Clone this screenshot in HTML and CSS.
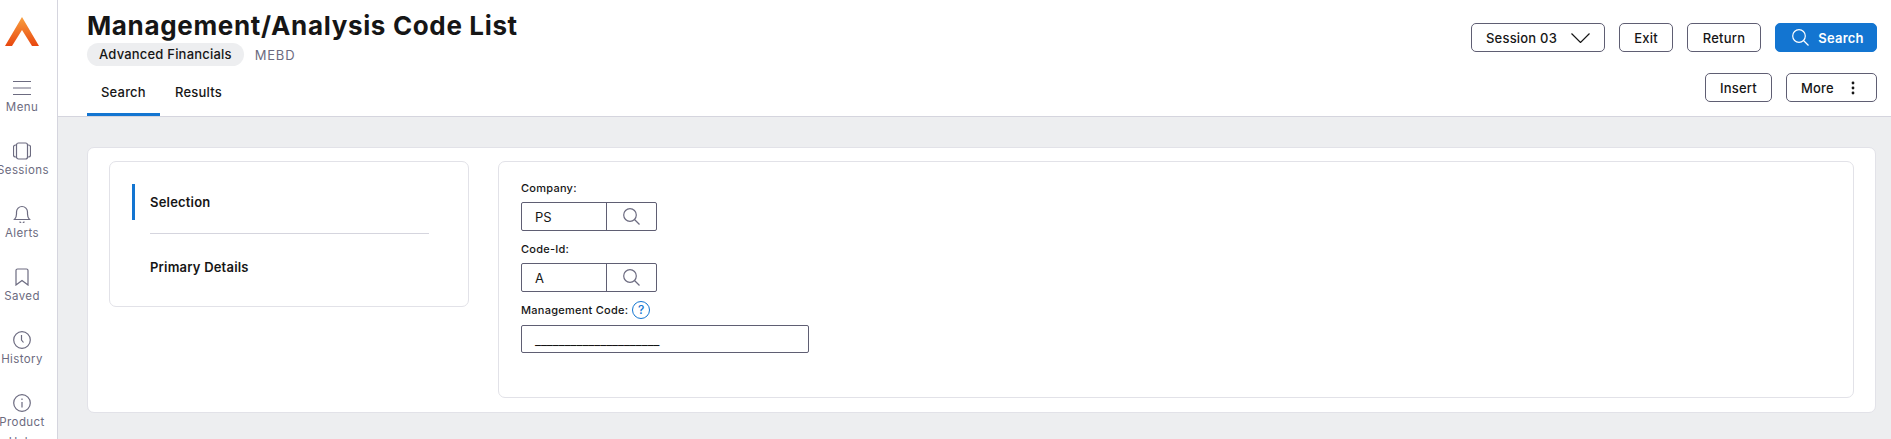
FILE: index.html
```html
<!DOCTYPE html>
<html lang="en">
  <head>
    <meta charset="utf-8" />
    <title>Management/Analysis Code List</title>
    <link rel="stylesheet" href="styles.css">
  </head>
  <body>
    <nav class="sidebar">
      <svg class="logo" width="34" height="30" viewBox="0 0 34 30">
        <defs>
          <linearGradient id="logo-fill" x1="0" y1="0" x2="0" y2="1">
            <stop offset="0" stop-color="#f9a03f" />
            <stop offset="1" stop-color="#e8470f" />
          </linearGradient>
        </defs>
        <polygon points="17,0 34,29 27,29 17,13 7,29 0,29" fill="url(#logo-fill)" />
      </svg>
      <a class="side-item">
        <svg width="18" height="18" viewBox="0 0 18 18"><path d="M0 2.500h18M0 9h18M0 15.500h18" /></svg>
        <span>Menu</span>
      </a>
      <a class="side-item">
        <svg width="18" height="18" viewBox="0 0 18 18"><rect x="3.500" y="1" width="11" height="16" rx="2" /><path d="M3.500 3H2.500A2 2 0 0 0 .5 5v8a2 2 0 0 0 2 2h1M14.500 3h1a2 2 0 0 1 2 2v8a2 2 0 0 1-2 2h-1" /></svg>
        <span>Sessions</span>
      </a>
      <a class="side-item">
        <svg width="18" height="18" viewBox="0 0 18 18"><path d="M1.500 14.500c1.500-1.500 2-3 2-5.500V7a5.500 5.500 0 0 1 11 0v2c0 2.500.5 4 2 5.500zM7 16.500a2 2 0 0 0 4 0" /></svg>
        <span>Alerts</span>
      </a>
      <a class="side-item">
        <svg width="18" height="18" viewBox="0 0 18 18"><path d="M3 2.500A1.500 1.500 0 0 1 4.500 1h9A1.500 1.500 0 0 1 15 2.500V17l-6-4.500L3 17z" /></svg>
        <span>Saved</span>
      </a>
      <a class="side-item">
        <svg width="18" height="18" viewBox="0 0 18 18"><circle cx="9" cy="9" r="8.300" /><path d="M8.500 4v5l2 2.500" /></svg>
        <span>History</span>
      </a>
      <a class="side-item">
        <svg width="18" height="18" viewBox="0 0 18 18"><circle cx="9" cy="9" r="8.300" /><path d="M9 8v5.500M9 4.500v1.500" /></svg>
        <span>Product Help</span>
      </a>
    </nav>

    <div class="page">
      <header class="header">
        <div class="header-top">
          <div class="titles">
            <h1>Management/Analysis Code List</h1>
            <div class="subtitle">
              <span class="pill">Advanced Financials</span>
              <span class="code">MEBD</span>
            </div>
          </div>
          <div class="actions">
            <button class="btn session">
              Session 03
              <svg width="19" height="10" viewBox="0 0 19 10"><path d="M.5.500l9 9 9-9" /></svg>
            </button>
            <button class="btn exit">Exit</button>
            <button class="btn return">Return</button>
            <button class="btn primary">
              <svg width="17" height="17" viewBox="0 0 17 17"><circle cx="7" cy="7" r="6.300" /><path d="M11.500 11.500l5 5" /></svg>
              Search
            </button>
          </div>
        </div>
        <div class="header-bottom">
          <div class="tabs">
            <a class="tab active">Search</a>
            <a class="tab">Results</a>
          </div>
          <div class="actions">
            <button class="btn insert">Insert</button>
            <button class="btn more">
              More
              <svg width="4" height="14" viewBox="0 0 4 14"><circle cx="2" cy="2" r="1.400" /><circle cx="2" cy="7" r="1.400" /><circle cx="2" cy="12" r="1.400" /></svg>
            </button>
          </div>
        </div>
      </header>

      <main class="content">
        <section class="card">
          <div class="panel steps">
            <a class="step active">Selection</a>
            <hr />
            <a class="step">Primary Details</a>
          </div>
          <form class="panel fields">
            <div class="form-row">
              <label>Company:</label>
              <div class="lookup">
                <span class="value">PS</span>
                <span class="lookup-btn">
                  <svg width="17" height="17" viewBox="0 0 17 17"><circle cx="7" cy="7" r="6.300" /><path d="M11.500 11.500l5 5" /></svg>
                </span>
              </div>
            </div>
            <div class="form-row">
              <label>Code-Id:</label>
              <div class="lookup">
                <span class="value">A</span>
                <span class="lookup-btn">
                  <svg width="17" height="17" viewBox="0 0 17 17"><circle cx="7" cy="7" r="6.300" /><path d="M11.500 11.500l5 5" /></svg>
                </span>
              </div>
            </div>
            <div class="form-row">
              <label class="with-help">Management Code:<span class="help">?</span></label>
              <div class="text-input"><span class="value">_____________________</span></div>
            </div>
          </form>
        </section>
      </main>
    </div>
  </body>
</html>
```

FILE: styles.css
```css
* {
  box-sizing: border-box;
}
html,
body {
  height: 100%;
  margin: 0;
  overflow: hidden;
}
body {
  display: flex;
  font-family: Inter, "Noto Sans", sans-serif;
  color: #161616;
  background-color: #edeef0;
}
svg {
  display: block;
  flex: none;
  fill: none;
  stroke: currentColor;
  stroke-width: 1.2;
}

.sidebar {
  flex: none;
  width: 58px;
  height: 100%;
  overflow: hidden;
  background-color: #fff;
  border-right: 1px solid #d5d5de;
  padding-right: 13px;
  display: flex;
  flex-direction: column;
  align-items: center;
}
.logo {
  margin-top: 17px;
  margin-bottom: 32px;
  stroke: none;
  margin-left: -1px;
}
.side-item {
  display: flex;
  flex-direction: column;
  align-items: center;
  height: 63px;
  flex: none;
  width: 60px;
  color: #6c6b80;
  font-size: 11.5px;
  letter-spacing: 0.4px;
  line-height: 20px;
  text-align: center;
}
.side-item span {
  width: 50px;
}

.page {
  flex: 1;
  min-width: 0;
  display: flex;
  flex-direction: column;
}
.header {
  flex: none;
  height: 117px;
  background-color: #fff;
  border-bottom: 1px solid #d5d5de;
  padding: 0 14px 0 29px;
}
.header-top {
  display: flex;
  justify-content: space-between;
  height: 73px;
}
.titles h1 {
  margin: 11px 0 0;
  font-size: 26px;
  line-height: 30px;
  font-weight: 700;
  letter-spacing: 0.65px;
}
.subtitle {
  display: flex;
  align-items: center;
  gap: 11px;
  margin-top: 2px;
}
.pill {
  height: 23px;
  line-height: 22px;
  padding: 0 12px;
  border-radius: 12px;
  background-color: #edeef0;
  font-size: 13px;
  font-weight: 500;
  letter-spacing: 0.2px;
}
.code {
  color: #6c6b80;
  font-size: 13px;
  letter-spacing: 0.8px;
}
.actions {
  display: flex;
  gap: 14px;
  padding-top: 23px;
}
.header-bottom .actions {
  padding-top: 0;
}
.btn {
  height: 29px;
  display: flex;
  align-items: center;
  justify-content: center;
  gap: 13px;
  padding: 0;
  border: 1px solid #5f5e73;
  border-radius: 5px;
  background-color: #fff;
  color: #161616;
  font-family: inherit;
  font-size: 13px;
  font-weight: 500;
  letter-spacing: 0.2px;
  white-space: nowrap;
}
.btn.session {
  width: 134px;
  gap: 14px;
}
.btn.exit {
  width: 54px;
}
.btn.return {
  width: 74px;
}
.btn.insert {
  width: 67px;
}
.btn.primary {
  width: 102px;
  gap: 9px;
  padding-left: 4px;
  background-color: #1375d1;
  border-color: #1375d1;
  color: #fff;
  font-weight: 600;
}
.btn.more {
  width: 91px;
  gap: 17px;
  justify-content: flex-start;
  padding-left: 14px;
}
.btn.more svg {
  fill: currentColor;
  stroke: none;
}

.header-bottom {
  display: flex;
  justify-content: space-between;
  height: 43px;
}
.tabs {
  display: flex;
}
.tab {
  height: 43px;
  padding: 9px 15px 0;
  font-size: 13px;
  line-height: 20px;
  font-weight: 500;
  letter-spacing: 0.2px;
  border-bottom: 3px solid transparent;
}
.tab.active {
  padding-left: 14px;
  border-bottom-color: #1375d1;
  width: 73px;
}

.content {
  flex: 1;
  padding: 30px 15px 0 29px;
}
.card {
  display: flex;
  align-items: flex-start;
  gap: 29px;
  height: 266px;
  padding: 13px 21px 0;
  background-color: #fff;
  border: 1px solid #e2e2e8;
  border-radius: 7px;
}
.panel {
  background-color: #fff;
  border: 1px solid #e2e2e8;
  border-radius: 7px;
}
.steps {
  flex: none;
  width: 360px;
  height: 146px;
  padding: 22px 39px 0 22px;
}
.step {
  display: block;
  height: 36px;
  padding-left: 15px;
  border-left: 3px solid transparent;
  font-size: 13px;
  line-height: 36px;
  font-weight: 600;
  letter-spacing: 0.2px;
}
.step.active {
  border-left-color: #1375d1;
}
.steps hr {
  height: 1px;
  margin: 13px 0 15px 18px;
  border: 0;
  background-color: #d5d5de;
}

.fields {
  flex: 1;
  height: 237px;
  padding: 17px 22px 0;
}
.form-row {
  margin-bottom: 9px;
}
.form-row label {
  display: flex;
  align-items: center;
  height: 18px;
  margin-bottom: 5px;
  font-size: 11px;
  font-weight: 500;
  letter-spacing: 0.25px;
}
.form-row label.with-help {
  height: 19px;
  margin-top: -1px;
  margin-bottom: 6px;
}
.lookup {
  display: flex;
  width: 136px;
  height: 29px;
  border: 1px solid #5f5e73;
  border-radius: 2px;
}
.lookup .value {
  width: 85px;
  border-right: 1px solid #5f5e73;
}
.value {
  display: block;
  padding-left: 13px;
  font-size: 13px;
  line-height: 28px;
}
.lookup-btn {
  flex: 1;
  display: flex;
  align-items: center;
  justify-content: center;
  color: #6c6b80;
}
.text-input {
  width: 288px;
  height: 28px;
  border: 1px solid #5f5e73;
  border-radius: 2px;
}
.help {
  width: 18px;
  height: 18px;
  margin-left: 4px;
  border: 1.500px solid #1375d1;
  border-radius: 50%;
  color: #1375d1;
  font-size: 12px;
  line-height: 15px;
  text-align: center;
}
```
